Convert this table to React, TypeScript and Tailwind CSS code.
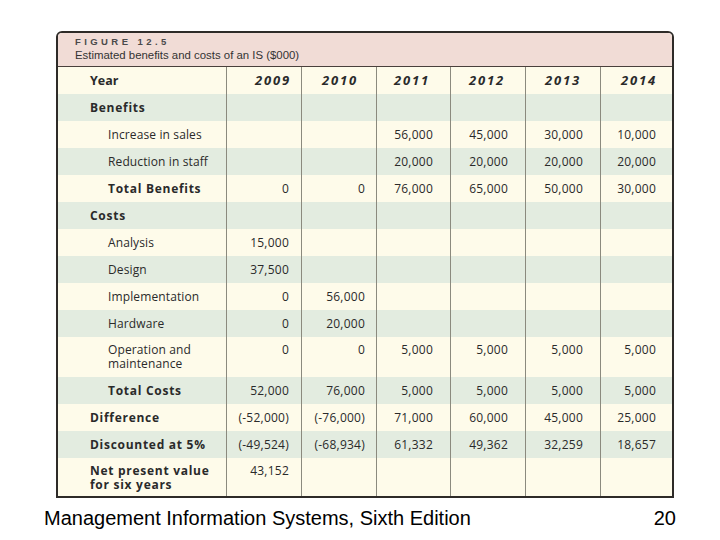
const CREAM = "bg-[#fefbea]";
const GREEN = "bg-[#e3ece0]";

type Row = {
  label: string;
  indent?: boolean;
  bold?: boolean;
  tall?: boolean;
  values: string[];
};

const ROWS: Row[] = [
  { label: "Benefits", bold: true, values: ["", "", "", "", "", ""] },
  { label: "Increase in sales", indent: true, values: ["", "", "56,000", "45,000", "30,000", "10,000"] },
  { label: "Reduction in staff", indent: true, values: ["", "", "20,000", "20,000", "20,000", "20,000"] },
  { label: "Total Benefits", indent: true, bold: true, values: ["0", "0", "76,000", "65,000", "50,000", "30,000"] },
  { label: "Costs", bold: true, values: ["", "", "", "", "", ""] },
  { label: "Analysis", indent: true, values: ["15,000", "", "", "", "", ""] },
  { label: "Design", indent: true, values: ["37,500", "", "", "", "", ""] },
  { label: "Implementation", indent: true, values: ["0", "56,000", "", "", "", ""] },
  { label: "Hardware", indent: true, values: ["0", "20,000", "", "", "", ""] },
  { label: "Operation and\nmaintenance", indent: true, tall: true, values: ["0", "0", "5,000", "5,000", "5,000", "5,000"] },
  { label: "Total Costs", indent: true, bold: true, values: ["52,000", "76,000", "5,000", "5,000", "5,000", "5,000"] },
  { label: "Difference", bold: true, values: ["(-52,000)", "(-76,000)", "71,000", "60,000", "45,000", "25,000"] },
  { label: "Discounted at 5%", bold: true, values: ["(-49,524)", "(-68,934)", "61,332", "49,362", "32,259", "18,657"] },
  { label: "Net present value\nfor six years", bold: true, tall: true, values: ["43,152", "", "", "", "", ""] },
];

const YEARS = ["2009", "2010", "2011", "2012", "2013", "2014"];
const YEAR_PAD = ["pr-[10px]", "pr-[18px]", "pr-[20px]", "pr-[20px]", "pr-[19px]", "pr-[16px]"];
const PAD = ["pr-[12px]", "pr-[11px]", "pr-[17px]", "pr-[17px]", "pr-[17px]", "pr-[17px]"];
const GRID = "grid grid-cols-[168px_75px_75px_74px_75px_75px_73px]";

export default function App() {
  return (
    <div className="w-[720px] h-[540px] bg-white">
      <div className="pt-[31px] pl-[56px]">
        <div className="w-[618px] border-2 border-[#2e2b28] rounded-t-[6px] overflow-hidden font-['Open_Sans',sans-serif] text-[#2a2a2a]">
          <div className="h-[34px] bg-[#f1dcd6] border-b border-[#4a403c] pl-[17px] pt-[3px] font-['Liberation_Sans',Arial,sans-serif]">
            <div className="text-[9.5px] font-bold tracking-[0.36em] text-[#4a4a4a] leading-[12px]">FIGURE 12.5</div>
            <div className="text-[11.4px] text-[#333] leading-[14px]">Estimated benefits and costs of an IS ($000)</div>
          </div>
          <div className={`${GRID} ${CREAM} h-[27px] items-stretch`}>
            <div className="pl-[32px] flex items-center font-bold text-[12.5px] pt-[1px]">Year</div>
            {YEARS.map((y, i) => (
              <div
                key={y}
                className={`border-l border-[#8b8a7e] flex items-center justify-end pt-[1px] ${YEAR_PAD[i]} font-bold italic text-[13px] tracking-[0.14em]`}
              >
                {y}
              </div>
            ))}
          </div>
          {ROWS.map((r, ri) => (
            <div
              key={r.label}
              className={`${GRID} ${ri % 2 === 0 ? GREEN : CREAM} ${r.tall ? (r.bold ? "h-[38px]" : "h-[40px]") : "h-[27px]"}`}
            >
              <div
                className={`${r.indent ? "pl-[50px]" : "pl-[32px]"} ${r.bold ? "font-bold tracking-[0.06em]" : "tracking-[0.01em]"} ${
                  r.tall ? "pt-[6px] leading-[14px]" : "flex items-center"
                } text-[12px] whitespace-pre-line`}
              >
                {r.label}
              </div>
              {r.values.map((v, i) => (
                <div
                  key={i}
                  className={`border-l border-[#8b8a7e] flex justify-end ${PAD[i]} text-[12px] tracking-[0.02em] ${
                    r.tall ? "items-start pt-[6px] leading-[14px]" : "items-center"
                  }`}
                >
                  {v}
                </div>
              ))}
            </div>
          ))}
        </div>
      </div>
      <div className="flex justify-between items-center pl-[44px] pr-[44px] pt-[9px] font-['Liberation_Sans',Arial,sans-serif] text-[20px] text-black leading-[23px]">
        <span>Management Information Systems, Sixth Edition</span>
        <span>20</span>
      </div>
    </div>
  );
}
